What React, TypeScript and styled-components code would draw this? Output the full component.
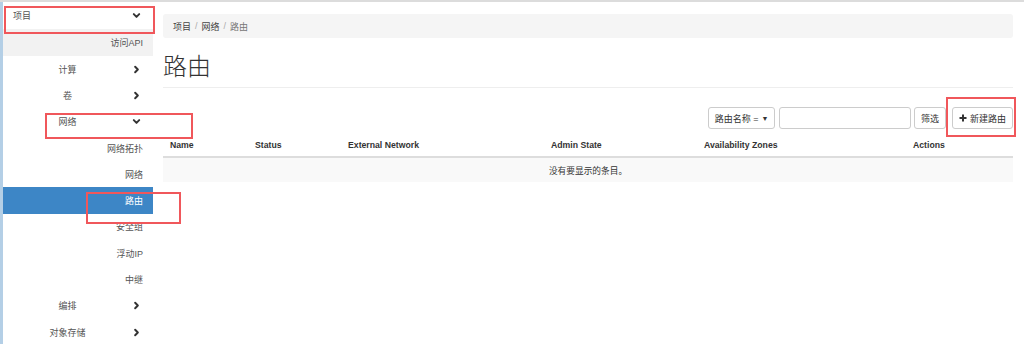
import React from "react";
import styled, { createGlobalStyle } from "styled-components";

const GlobalStyle = createGlobalStyle`
  html, body {
    margin: 0;
    padding: 0;
    background: #fff;
  }
  body {
    font-family: "Liberation Sans", "Noto Sans CJK SC", sans-serif;
    color: #333;
  }
`;

const CJK = `"Liberation Sans", "Noto Sans CJK SC", sans-serif`;

const Page = styled.div`
  position: relative;
  display: flex;
  width: 1024px;
  height: 344px;
  box-sizing: border-box;
  border-top: 2px solid #dcdcdc;
  overflow: hidden;
`;

const LeftEdge = styled.div`
  width: 3px;
  flex: none;
  background: #b4cfe6;
`;

const Sidebar = styled.nav`
  width: 150px;
  flex: none;
  display: flex;
  flex-direction: column;
  font-family: ${CJK};
  font-size: 9px;
  color: #555;
`;

const Row = styled.div<{ variant: "top" | "group" | "item"; active?: boolean; shaded?: boolean }>`
  height: ${({ variant, shaded }) => (variant === "top" || shaded ? 27 : 26.3)}px;
  flex: none;
  display: flex;
  align-items: center;
  box-sizing: border-box;
  background: ${({ active, shaded }) =>
    active ? "#3d86c6" : shaded ? "#f2f2f2" : "transparent"};
  color: ${({ active }) => (active ? "#fff" : "#555")};
  justify-content: ${({ variant }) =>
    variant === "item" ? "flex-end" : "flex-start"};
  padding: ${({ variant }) =>
    variant === "top" ? "0 12px 0 10px" : variant === "item" ? "0 10px 0 0" : "0 12px 0 0"};
`;

const RowLabel = styled.span<{ centered?: boolean }>`
  flex: ${({ centered }) => (centered ? 1 : "none")};
  text-align: ${({ centered }) => (centered ? "center" : "left")};
`;

const Spacer = styled.span`
  flex: 1;
`;

const Chevron = ({ down }: { down?: boolean }) => (
  <svg width="9" height="9" viewBox="0 0 10 10" style={{ flex: "none" }}>
    <path
      d={down ? "M2 3.5 L5 6.5 L8 3.5" : "M3.5 2 L6.5 5 L3.5 8"}
      fill="none"
      stroke="#333"
      strokeWidth="2.2"
      strokeLinecap="round"
      strokeLinejoin="round"
    />
  </svg>
);

const Main = styled.main`
  flex: 1;
  display: flex;
  flex-direction: column;
  padding: 12px 11px 0 10px;
  min-width: 0;
`;

const Breadcrumb = styled.div`
  height: 24px;
  background: #f5f5f5;
  border-radius: 3px;
  display: flex;
  align-items: center;
  padding: 0 10px;
  font-family: ${CJK};
  font-size: 9px;
`;

const Crumb = styled.span<{ current?: boolean }>`
  color: ${({ current }) => (current ? "#777" : "#444")};
`;

const Sep = styled.span`
  color: #aaa;
  padding: 0 4px;
`;

const Title = styled.h1`
  margin: 12px 0 0;
  font-family: "Noto Sans CJK SC", sans-serif;
  font-weight: 300;
  font-size: 24px;
  line-height: 30px;
  color: #333;
`;

const Rule = styled.hr`
  margin: 7px 0 0;
  border: 0;
  border-top: 1px solid #eee;
`;

const Toolbar = styled.div`
  margin-top: 19px;
  height: 22px;
  display: flex;
  justify-content: flex-end;
  gap: 4px;
`;

const Button = styled.button<{ width: number; gapLeft?: number }>`
  width: ${({ width }) => width}px;
  height: 22px;
  margin-left: ${({ gapLeft }) => gapLeft ?? 0}px;
  padding: 0;
  border: 1px solid #ccc;
  border-radius: 3px;
  background: #fff;
  font-family: ${CJK};
  font-size: 9px;
  color: #333;
  display: flex;
  align-items: center;
  justify-content: center;
  gap: 3px;
`;

const SearchInput = styled.input`
  width: 132px;
  height: 22px;
  box-sizing: border-box;
  border: 1px solid #ccc;
  border-radius: 3px;
  padding: 0 6px;
  font-size: 9px;
`;

const COLUMNS = "85px 93px 203px 153px 209px 1fr";

const Table = styled.div`
  margin-top: 5px;
  display: flex;
  flex-direction: column;
  font-family: ${CJK};
  font-size: 8.7px;
`;

const HeaderRow = styled.div`
  display: grid;
  grid-template-columns: ${COLUMNS};
  height: 22px;
  align-items: center;
  border-bottom: 2px solid #ddd;
`;

const HeaderCell = styled.div`
  padding-left: 7px;
  font-weight: bold;
  color: #333;
`;

const EmptyRow = styled.div`
  height: 24px;
  display: flex;
  align-items: center;
  justify-content: center;
  background: #f9f9f9;
  color: #333;
`;

const Mark = styled.div<{ x: number; y: number; w: number; h: number }>`
  position: absolute;
  left: ${({ x }) => x}px;
  top: ${({ y }) => y - 2}px;
  width: ${({ w }) => w}px;
  height: ${({ h }) => h}px;
  box-sizing: border-box;
  border: 2px solid #f0575b;
  pointer-events: none;
`;

const headers = ["Name", "Status", "External Network", "Admin State", "Availability Zones", "Actions"];

const subItems = ["网络拓扑", "网络", "路由", "安全组", "浮动IP", "中继"];

export default function App() {
  return (
    <>
      <GlobalStyle />
      <Page>
        <LeftEdge />
        <Sidebar>
          <Row variant="top">
            <RowLabel>项目</RowLabel>
            <Spacer />
            <Chevron down />
          </Row>
          <Row variant="item" shaded>访问API</Row>
          <Row variant="group">
            <RowLabel centered>计算</RowLabel>
            <Chevron />
          </Row>
          <Row variant="group">
            <RowLabel centered>卷</RowLabel>
            <Chevron />
          </Row>
          <Row variant="group">
            <RowLabel centered>网络</RowLabel>
            <Chevron down />
          </Row>
          {subItems.map((item) => (
            <Row key={item} variant="item" active={item === "路由"}>
              {item}
            </Row>
          ))}
          <Row variant="group">
            <RowLabel centered>编排</RowLabel>
            <Chevron />
          </Row>
          <Row variant="group">
            <RowLabel centered>对象存储</RowLabel>
            <Chevron />
          </Row>
        </Sidebar>
        <Main>
          <Breadcrumb>
            <Crumb>项目</Crumb>
            <Sep>/</Sep>
            <Crumb>网络</Crumb>
            <Sep>/</Sep>
            <Crumb current>路由</Crumb>
          </Breadcrumb>
          <Title>路由</Title>
          <Rule />
          <Toolbar>
            <Button width={67}>
              路由名称 = <span style={{ fontSize: 7 }}>▼</span>
            </Button>
            <SearchInput />
            <Button width={32} gapLeft={-1}>筛选</Button>
            <Button width={61} gapLeft={2}>
              <svg width="8" height="8" viewBox="0 0 8 8">
                <path d="M4 0.5 V7.5 M0.5 4 H7.5" stroke="#333" strokeWidth="2" />
              </svg>
              新建路由
            </Button>
          </Toolbar>
          <Table>
            <HeaderRow>
              {headers.map((h) => (
                <HeaderCell key={h}>{h}</HeaderCell>
              ))}
            </HeaderRow>
            <EmptyRow>没有要显示的条目。</EmptyRow>
          </Table>
        </Main>
        <Mark x={4} y={6} w={151} h={28} />
        <Mark x={45} y={113} w={148} h={26} />
        <Mark x={86} y={192} w={95} h={32} />
        <Mark x={946} y={97} w={70} h={40} />
      </Page>
    </>
  );
}
